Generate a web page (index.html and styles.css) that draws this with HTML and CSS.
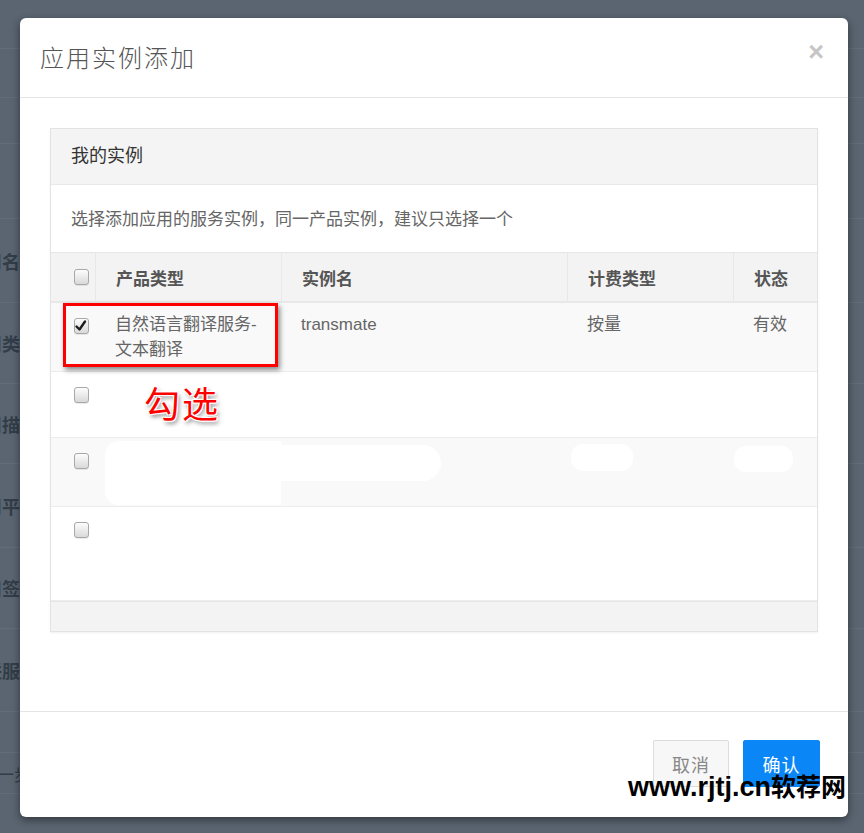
FILE: index.html
```html
<!DOCTYPE html>
<html>
<head>
    <meta charset="utf-8">
    <title>应用实例添加</title>
    <link rel="stylesheet" href="styles.css">
</head>
<body>
    <div class="page">
        <div class="page-row" style="height: 48px"></div>
        <div class="page-row" style="height: 48px"></div>
        <div class="page-row" style="height: 45px"></div>
        <div class="page-row" style="height: 74px"></div>
        <div class="page-row" style="height: 83px"><span class="page-label">应用名称</span></div>
        <div class="page-row" style="height: 80px"><span class="page-label">应用类型</span></div>
        <div class="page-row" style="height: 79px"><span class="page-label">应用描述</span></div>
        <div class="page-row" style="height: 83px"><span class="page-label">应用平台</span></div>
        <div class="page-row" style="height: 80px"><span class="page-label">应用签名</span></div>
        <div class="page-row" style="height: 82px"><span class="page-label">关联服务</span></div>
        <div class="page-row" style="height: 40px"></div>
        <div class="page-row" style="height: 40px"><span class="page-btn">上一步</span></div>
    </div>

    <div class="modal">
        <div class="modal-header">
            <h4 class="modal-title">应用实例添加</h4>
            <span class="close">×</span>
        </div>

        <div class="modal-body">
            <div class="panel">
                <div class="panel-heading">我的实例</div>
                <div class="panel-body">选择添加应用的服务实例，同一产品实例，建议只选择一个</div>
                <table class="table">
                    <colgroup>
                        <col style="width: 44px">
                        <col style="width: 186px">
                        <col style="width: 286px">
                        <col style="width: 166px">
                        <col>
                    </colgroup>
                    <thead>
                        <tr>
                            <th class="check"><span class="checkbox"></span></th>
                            <th>产品类型</th>
                            <th>实例名</th>
                            <th>计费类型</th>
                            <th>状态</th>
                        </tr>
                    </thead>
                    <tbody>
                        <tr class="row-1 striped">
                            <td class="check">
                                <span class="checkbox">
                                    <svg width="14" height="15" viewBox="0 0 14 15"><path d="M2.5 8.5 L5.5 11.5 L11 3.5" fill="none" stroke="#1e1e1e" stroke-width="2.4" stroke-linecap="round" stroke-linejoin="round"/></svg>
                                </span>
                            </td>
                            <td>自然语言翻译服务-<br>文本翻译</td>
                            <td>transmate</td>
                            <td>按量</td>
                            <td>有效</td>
                        </tr>
                        <tr class="row-2">
                            <td class="check"><span class="checkbox"></span></td>
                            <td></td>
                            <td></td>
                            <td></td>
                            <td></td>
                        </tr>
                        <tr class="row-3 striped">
                            <td class="check"><span class="checkbox"></span></td>
                            <td><span class="blot blot-name"></span></td>
                            <td><span class="blot blot-inst"></span></td>
                            <td><span class="blot blot-fee"></span></td>
                            <td><span class="blot blot-state"></span></td>
                        </tr>
                        <tr class="row-4">
                            <td class="check"><span class="checkbox"></span></td>
                            <td></td>
                            <td></td>
                            <td></td>
                            <td></td>
                        </tr>
                    </tbody>
                </table>
                <div class="panel-footer"></div>
            </div>
        </div>

        <div class="modal-footer">
            <button class="btn btn-default">取消</button>
            <button class="btn btn-primary">确认</button>
        </div>

        <!-- annotation drawn over the screenshot -->
        <div class="mark-box"></div>
        <div class="mark-text">勾选</div>
    </div>

    <div class="watermark">www.rjtj.cn<span class="wm-cn">软荐网</span></div>
</body>
</html>
```

FILE: styles.css
```css
body {
    margin: 0;
    height: 833px;
    overflow: hidden;
    position: relative;
    background-color: #5a6571;
    font-family: "Liberation Sans", "Noto Sans CJK SC", sans-serif;
}

/* page behind the backdrop */
.page {
    display: flex;
    flex-direction: column;
}

.page-row {
    border-bottom: 1px solid #626d79;
    display: flex;
    align-items: center;
    overflow: hidden;
}

.page-label {
    margin-left: -34px;
    font-size: 18px;
    font-weight: bold;
    color: #333d48;
    white-space: nowrap;
}

.page-btn {
    margin-left: -20px;
    font-size: 17px;
    color: #333d48;
    white-space: nowrap;
}

/* modal */
.modal {
    position: absolute;
    left: 20px;
    top: 18px;
    width: 828px;
    height: 799px;
    background-color: #fff;
    border-radius: 6px;
    box-shadow: 0 3px 9px rgba(0, 0, 0, 0.45);
    display: flex;
    flex-direction: column;
}

.modal-header {
    height: 79px;
    border-bottom: 1px solid #e5e5e5;
    display: flex;
    align-items: center;
    justify-content: space-between;
    padding: 0 24px 0 20px;
}

.modal-title {
    margin: -3px 0 0 0;
    font-size: 24px;
    font-weight: 300;
    letter-spacing: 2px;
    color: #555;
}

.close {
    font-size: 27px;
    font-weight: bold;
    color: #c6c6c6;
    margin-top: -10px;
}

.modal-body {
    flex: 1;
    padding: 30px 30px 0 30px;
}

.panel {
    border: 1px solid #e3e3e3;
    box-shadow: 0 1px 2px rgba(0, 0, 0, 0.06);
}

.panel-heading {
    height: 55px;
    line-height: 55px;
    padding: 0 20px;
    background-color: #f4f4f4;
    border-bottom: 1px solid #e8e8e8;
    font-size: 18px;
    color: #333;
}

.panel-body {
    padding: 22px 20px 20px;
    line-height: 25px;
    font-size: 17px;
    color: #666;
}

.table {
    width: 100%;
    table-layout: fixed;
    border-collapse: separate;
    border-spacing: 0;
    font-size: 17px;
    color: #666;
}

.table th {
    height: 48px;
    padding: 0 20px;
    text-align: left;
    font-weight: bold;
    color: #555;
    background-color: #f3f3f3;
    border-top: 1px solid #e6e6e6;
    border-bottom: 2px solid #e8e8e8;
    border-left: 1px solid #e8e8e8;
    vertical-align: middle;
}

.table th:first-child {
    border-left: none;
}

.table td {
    padding: 9px 20px;
    line-height: 25px;
    vertical-align: top;
    border-bottom: 1px solid #ececec;
}

.table .check {
    padding: 0 0 0 23px;
}

.table td.check {
    padding-top: 15px;
}

.row-1 { height: 68px; }
.row-2 { height: 66px; }
.row-3 { height: 69px; }
.row-4 { height: 94px; }

.striped td {
    background-color: #f9f9f9;
}

.checkbox {
    display: block;
    width: 13px;
    height: 14px;
    border: 1px solid #a8a8a8;
    border-radius: 3px;
    background: linear-gradient(#fdfdfd, #d9d9d9);
    box-shadow: 0 1px 0 rgba(0, 0, 0, 0.08);
}

.checkbox svg {
    display: block;
    margin: -1px 0 0 -1px;
}

/* white smudges that hide a row */
.blot {
    display: block;
    background-color: #fff;
}

.blot-name {
    height: 64px;
    margin: -6px -20px -12px -10px;
    border-radius: 14px 0 0 14px;
}

.blot-inst {
    width: 160px;
    height: 36px;
    margin: -2px 0 0 -20px;
    border-radius: 0 18px 18px 0;
}

.blot-fee {
    width: 62px;
    height: 27px;
    margin: -3px 0 0 -16px;
    border-radius: 12px;
}

.blot-state {
    width: 59px;
    height: 26px;
    margin: -1px 0 0 -19px;
    border-radius: 12px;
}

.panel-footer {
    height: 29px;
    background-color: #f3f3f3;
    border-top: 1px solid #e6e6e6;
}

.modal-footer {
    height: 106px;
    border-top: 1px solid #e5e5e5;
    display: flex;
    justify-content: flex-end;
    align-items: flex-start;
    gap: 14px;
    padding: 28px 28px 0 0;
    box-sizing: border-box;
}

.btn {
    width: 77px;
    height: 47px;
    font-family: "Liberation Sans", "Noto Sans CJK SC", sans-serif;
    font-size: 18px;
    letter-spacing: 1px;
    border-radius: 2px;
    cursor: pointer;
}

.btn-default {
    width: 76px;
    background-color: #f7f7f7;
    border: 1px solid #dcdcdc;
    color: #888;
}

.btn-primary {
    background-color: #0a86f7;
    border: 1px solid #0a86f7;
    color: #fff;
}

/* red annotation */
.mark-box {
    position: absolute;
    left: 43px;
    top: 285px;
    width: 209px;
    height: 58px;
    border: 3px solid #f00;
    box-shadow: 2px 3px 5px rgba(0, 0, 0, 0.45);
}

.mark-text {
    position: absolute;
    left: 124px;
    top: 364px;
    font-family: "Noto Sans CJK SC", sans-serif;
    font-size: 36px;
    line-height: 40px;
    letter-spacing: 2px;
    color: #f00;
    text-shadow: -1px -1px 0 #fff, 1px -1px 0 #fff, -1px 1px 0 #fff, 1px 1px 0 #fff, 2px 3px 4px rgba(0, 0, 0, 0.5);
}

.watermark {
    position: absolute;
    left: 628px;
    top: 772px;
    font-size: 27px;
    line-height: 27px;
    font-weight: bold;
    color: #000;
    white-space: nowrap;
}

.wm-cn {
    font-family: "Noto Sans CJK SC", sans-serif;
    font-size: 25px;
}
```
